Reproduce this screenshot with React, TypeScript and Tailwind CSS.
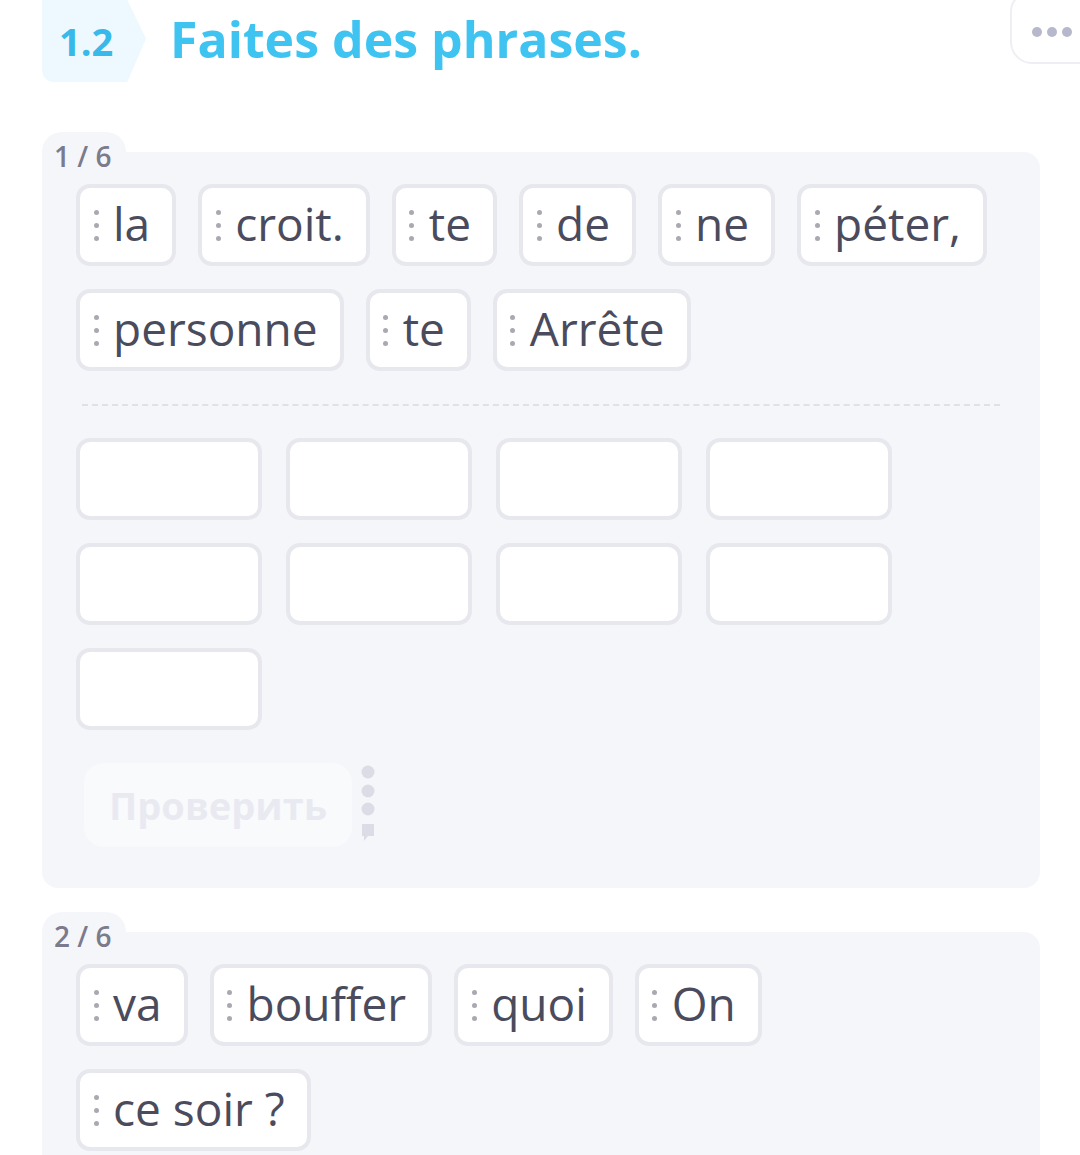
import React from 'react';

const font = { fontFamily: '"Open Sans", "Noto Sans", sans-serif' };

type Task = { label: string; words: string[]; slots?: number };

const tasks: Task[] = [
  { label: '1 / 6', words: ['la', 'croit.', 'te', 'de', 'ne', 'péter,', 'personne', 'te', 'Arrête'], slots: 9 },
  { label: '2 / 6', words: ['va', 'bouffer', 'quoi', 'On', 'ce soir ?'] },
];

function Grip() {
  return (
    <span className="flex flex-col gap-[8px] w-[6px] items-center">
      <span className="h-[5px] w-[5px] rounded-full bg-[#a9a9b2]" />
      <span className="h-[5px] w-[5px] rounded-full bg-[#a9a9b2]" />
      <span className="h-[5px] w-[5px] rounded-full bg-[#a9a9b2]" />
    </span>
  );
}

function WordChip({ word }: { word: string }) {
  return (
    <div className="flex h-[82px] items-center gap-[14px] rounded-[14px] border-[4px] border-[#e7e8ee] bg-white pl-[13px] pr-[22px]">
      <Grip />
      <span className="text-[46px] leading-none text-[#4a4b5c] pb-[4px]">{word}</span>
    </div>
  );
}

function Slot() {
  return <div className="h-[82px] w-[186px] rounded-[14px] border-[4px] border-[#e7e8ee] bg-white" />;
}

function HintIcon() {
  return (
    <svg width="16" height="80" viewBox="0 0 16 80" className="shrink-0">
      <circle cx="8" cy="7" r="6.5" fill="#dcdce6" />
      <circle cx="8" cy="26" r="6.5" fill="#dcdce6" />
      <circle cx="8" cy="44" r="6.5" fill="#dcdce6" />
      <path d="M2 59 h12 v12 h-6 l-4 5 v-5 h-2 z" fill="#dcdce6" />
    </svg>
  );
}

function TaskCard({ task }: { task: Task }) {
  return (
    <div className="flex flex-col">
      <div className="relative z-10 flex h-[20px] w-[84px] items-start rounded-t-[20px] bg-[#f5f6fa] pl-[12px]">
        <span className="mt-[10px] text-[28px] font-semibold leading-none text-[#7b7b8d]">{task.label}</span>
      </div>
      <div className="rounded-b-[16px] rounded-tr-[16px] bg-[#f5f6fa] pl-[34px] pr-[40px] pt-[32px] pb-[41px]">
        <div className="flex flex-wrap gap-x-[22px] gap-y-[23px]">
          {task.words.map((w, i) => (
            <WordChip key={i} word={w} />
          ))}
        </div>
        {task.slots ? (
          <>
            <div className="ml-[6px] mt-[33px] border-t-[2px] border-dashed border-[#dfe0e8]" />
            <div className="mt-[32px] flex flex-wrap gap-x-[24px] gap-y-[23px]">
              {Array.from({ length: task.slots }).map((_, i) => (
                <Slot key={i} />
              ))}
            </div>
            <div className="mt-[33px] ml-[8px] flex items-center gap-[8px]">
              <div className="flex h-[84px] w-[268px] items-center justify-center rounded-[20px] bg-[#f9fafc]">
                <span className="text-[38px] font-bold text-[#e9eaf1]">Проверить</span>
              </div>
              <HintIcon />
            </div>
          </>
        ) : null}
      </div>
    </div>
  );
}

export default function App() {
  return (
    <div className="h-[1155px] overflow-hidden bg-white" style={font}>
      <div className="flex items-start justify-between pl-[42px]">
        <div className="flex items-center">
          <div className="flex h-[82px] w-[104px] items-center rounded-bl-[12px] bg-[#edf9fe] pl-[17px] [clip-path:polygon(0_0,82%_0,100%_47%,82%_100%,0_100%)]">
            <span className="text-[38px] font-bold leading-none text-[#39b9e9]">1.2</span>
          </div>
          <h1 className="ml-[24px] text-[50px] font-bold leading-none text-[#3fc3f0] pb-[4px]">Faites des phrases.</h1>
        </div>
        <div className="-mt-[10px] -mr-[20px] flex h-[74px] w-[90px] items-center gap-[5px] rounded-[22px] border-[2px] border-[#eeeef4] bg-white pl-[20px] pt-[10px]">
          <span className="h-[10px] w-[10px] rounded-full bg-[#b8b8cd]" />
          <span className="h-[10px] w-[10px] rounded-full bg-[#b8b8cd]" />
          <span className="h-[10px] w-[10px] rounded-full bg-[#b8b8cd]" />
        </div>
      </div>
      <div className="mt-[50px] flex w-[998px] flex-col gap-[24px] pl-[42px] box-content">
        {tasks.map((t, i) => (
          <TaskCard key={i} task={t} />
        ))}
      </div>
    </div>
  );
}
